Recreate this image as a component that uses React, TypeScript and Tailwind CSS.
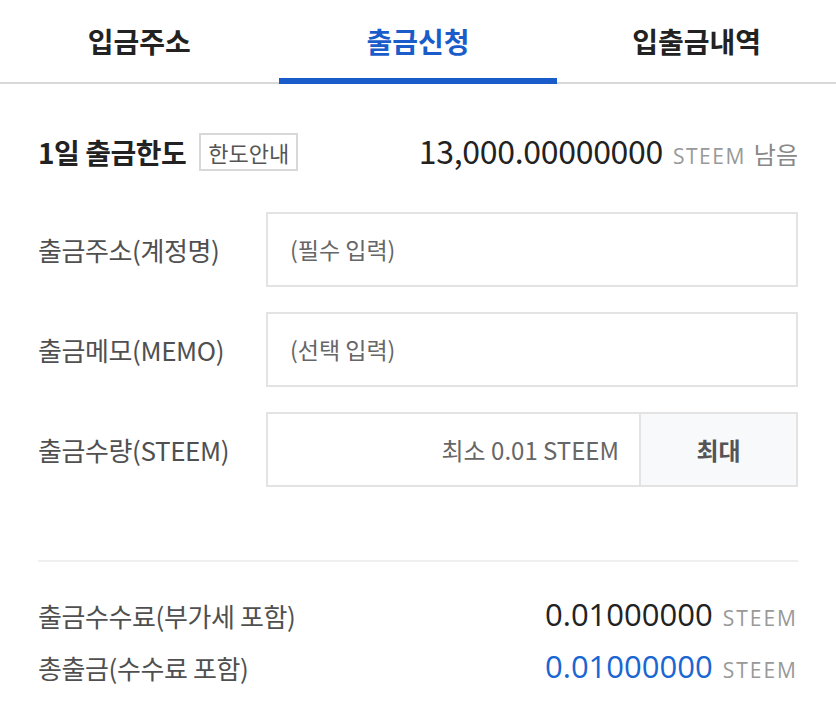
import { useState } from "react";

const KR = { fontFamily: '"Noto Sans CJK KR", "Noto Sans", sans-serif' };
const NUM = { fontFamily: '"Open Sans", "Noto Sans CJK KR", sans-serif' };

const tabs = ["입금주소", "출금신청", "입출금내역"];

function FieldRow({ label, children }: { label: string; children: React.ReactNode }) {
  return (
    <div className="flex items-center h-[75px]">
      <div className="w-[228px] text-[26px] text-[#505050] tracking-[-0.4px]">{label}</div>
      <div className="flex-1 flex h-full border-2 border-[#e3e3e3]">{children}</div>
    </div>
  );
}

export default function App() {
  const [active, setActive] = useState(1);

  return (
    <div className="w-[836px] h-[720px] bg-white overflow-hidden" style={KR}>
      <div className="flex h-[84px] border-b-2 border-[#d8d8d8]">
        {tabs.map((t, i) => (
          <button
            key={t}
            onClick={() => setActive(i)}
            className={`relative flex-1 flex items-center justify-center text-[28px] font-bold ${
              i === active ? "text-[#1a5dca]" : "text-[#222]"
            }`}
          >
            {t}
            {i === active && (
              <span className="absolute left-0 right-0 bottom-[-2px] h-[6px] bg-[#1a5dca]" />
            )}
          </button>
        ))}
      </div>

      <div className="px-[38px]">
        <div className="flex items-center justify-between h-[38px] mt-[49px]">
          <div className="flex items-center gap-[13px]">
            <span className="text-[28px] font-bold text-[#222] tracking-[-0.5px]">1일 출금한도</span>
            <span className="h-[38px] px-[7px] flex items-center border-2 border-[#d8d8d8] text-[22px] text-[#555]">
              한도안내
            </span>
          </div>
          <div className="flex items-baseline pb-[5px]">
            <span className="text-[32px] text-[#222] tracking-[-0.3px]">13,000.00000000</span>
            <span className="ml-[10px] text-[21px] text-[#999] tracking-[1.5px]" style={NUM}>STEEM</span>
            <span className="ml-[8px] text-[24px] text-[#888]">남음</span>
          </div>
        </div>

        <div className="mt-[41px] flex flex-col gap-[25px]">
          <FieldRow label="출금주소(계정명)">
            <input
              className="flex-1 px-[22px] text-[23px] outline-none placeholder:text-[#666]"
              placeholder="(필수 입력)"
            />
          </FieldRow>
          <FieldRow label="출금메모(MEMO)">
            <input
              className="flex-1 px-[22px] text-[23px] outline-none placeholder:text-[#666]"
              placeholder="(선택 입력)"
            />
          </FieldRow>
          <FieldRow label="출금수량(STEEM)">
            <input
              className="flex-1 min-w-0 px-[20px] text-right text-[24px] outline-none placeholder:text-[#666]"
              placeholder="최소 0.01 STEEM"
            />
            <button className="w-[157px] border-l-2 border-[#e3e3e3] bg-[#f7f9fb] text-[24px] font-bold text-[#555]">
              최대
            </button>
          </FieldRow>
        </div>

        <div className="mt-[73px] border-t-2 border-[#efefef]" />

        <div className="mt-[38px] flex flex-col gap-[22px]">
          <div className="flex items-center justify-between h-[30px]">
            <span className="text-[26px] text-[#505050] tracking-[-0.4px]">출금수수료(부가세 포함)</span>
            <div className="flex items-baseline pb-[2px]">
              <span className="text-[31px] text-[#222]" style={NUM}>0.01000000</span>
              <span className="ml-[10px] text-[21px] text-[#999] tracking-[2px]" style={NUM}>STEEM</span>
            </div>
          </div>
          <div className="flex items-center justify-between h-[30px]">
            <span className="text-[26px] text-[#505050] tracking-[-0.4px]">총출금(수수료 포함)</span>
            <div className="flex items-baseline pb-[2px]">
              <span className="text-[31px] text-[#1a66d2]" style={NUM}>0.01000000</span>
              <span className="ml-[10px] text-[21px] text-[#999] tracking-[2px]" style={NUM}>STEEM</span>
            </div>
          </div>
        </div>
      </div>
    </div>
  );
}
